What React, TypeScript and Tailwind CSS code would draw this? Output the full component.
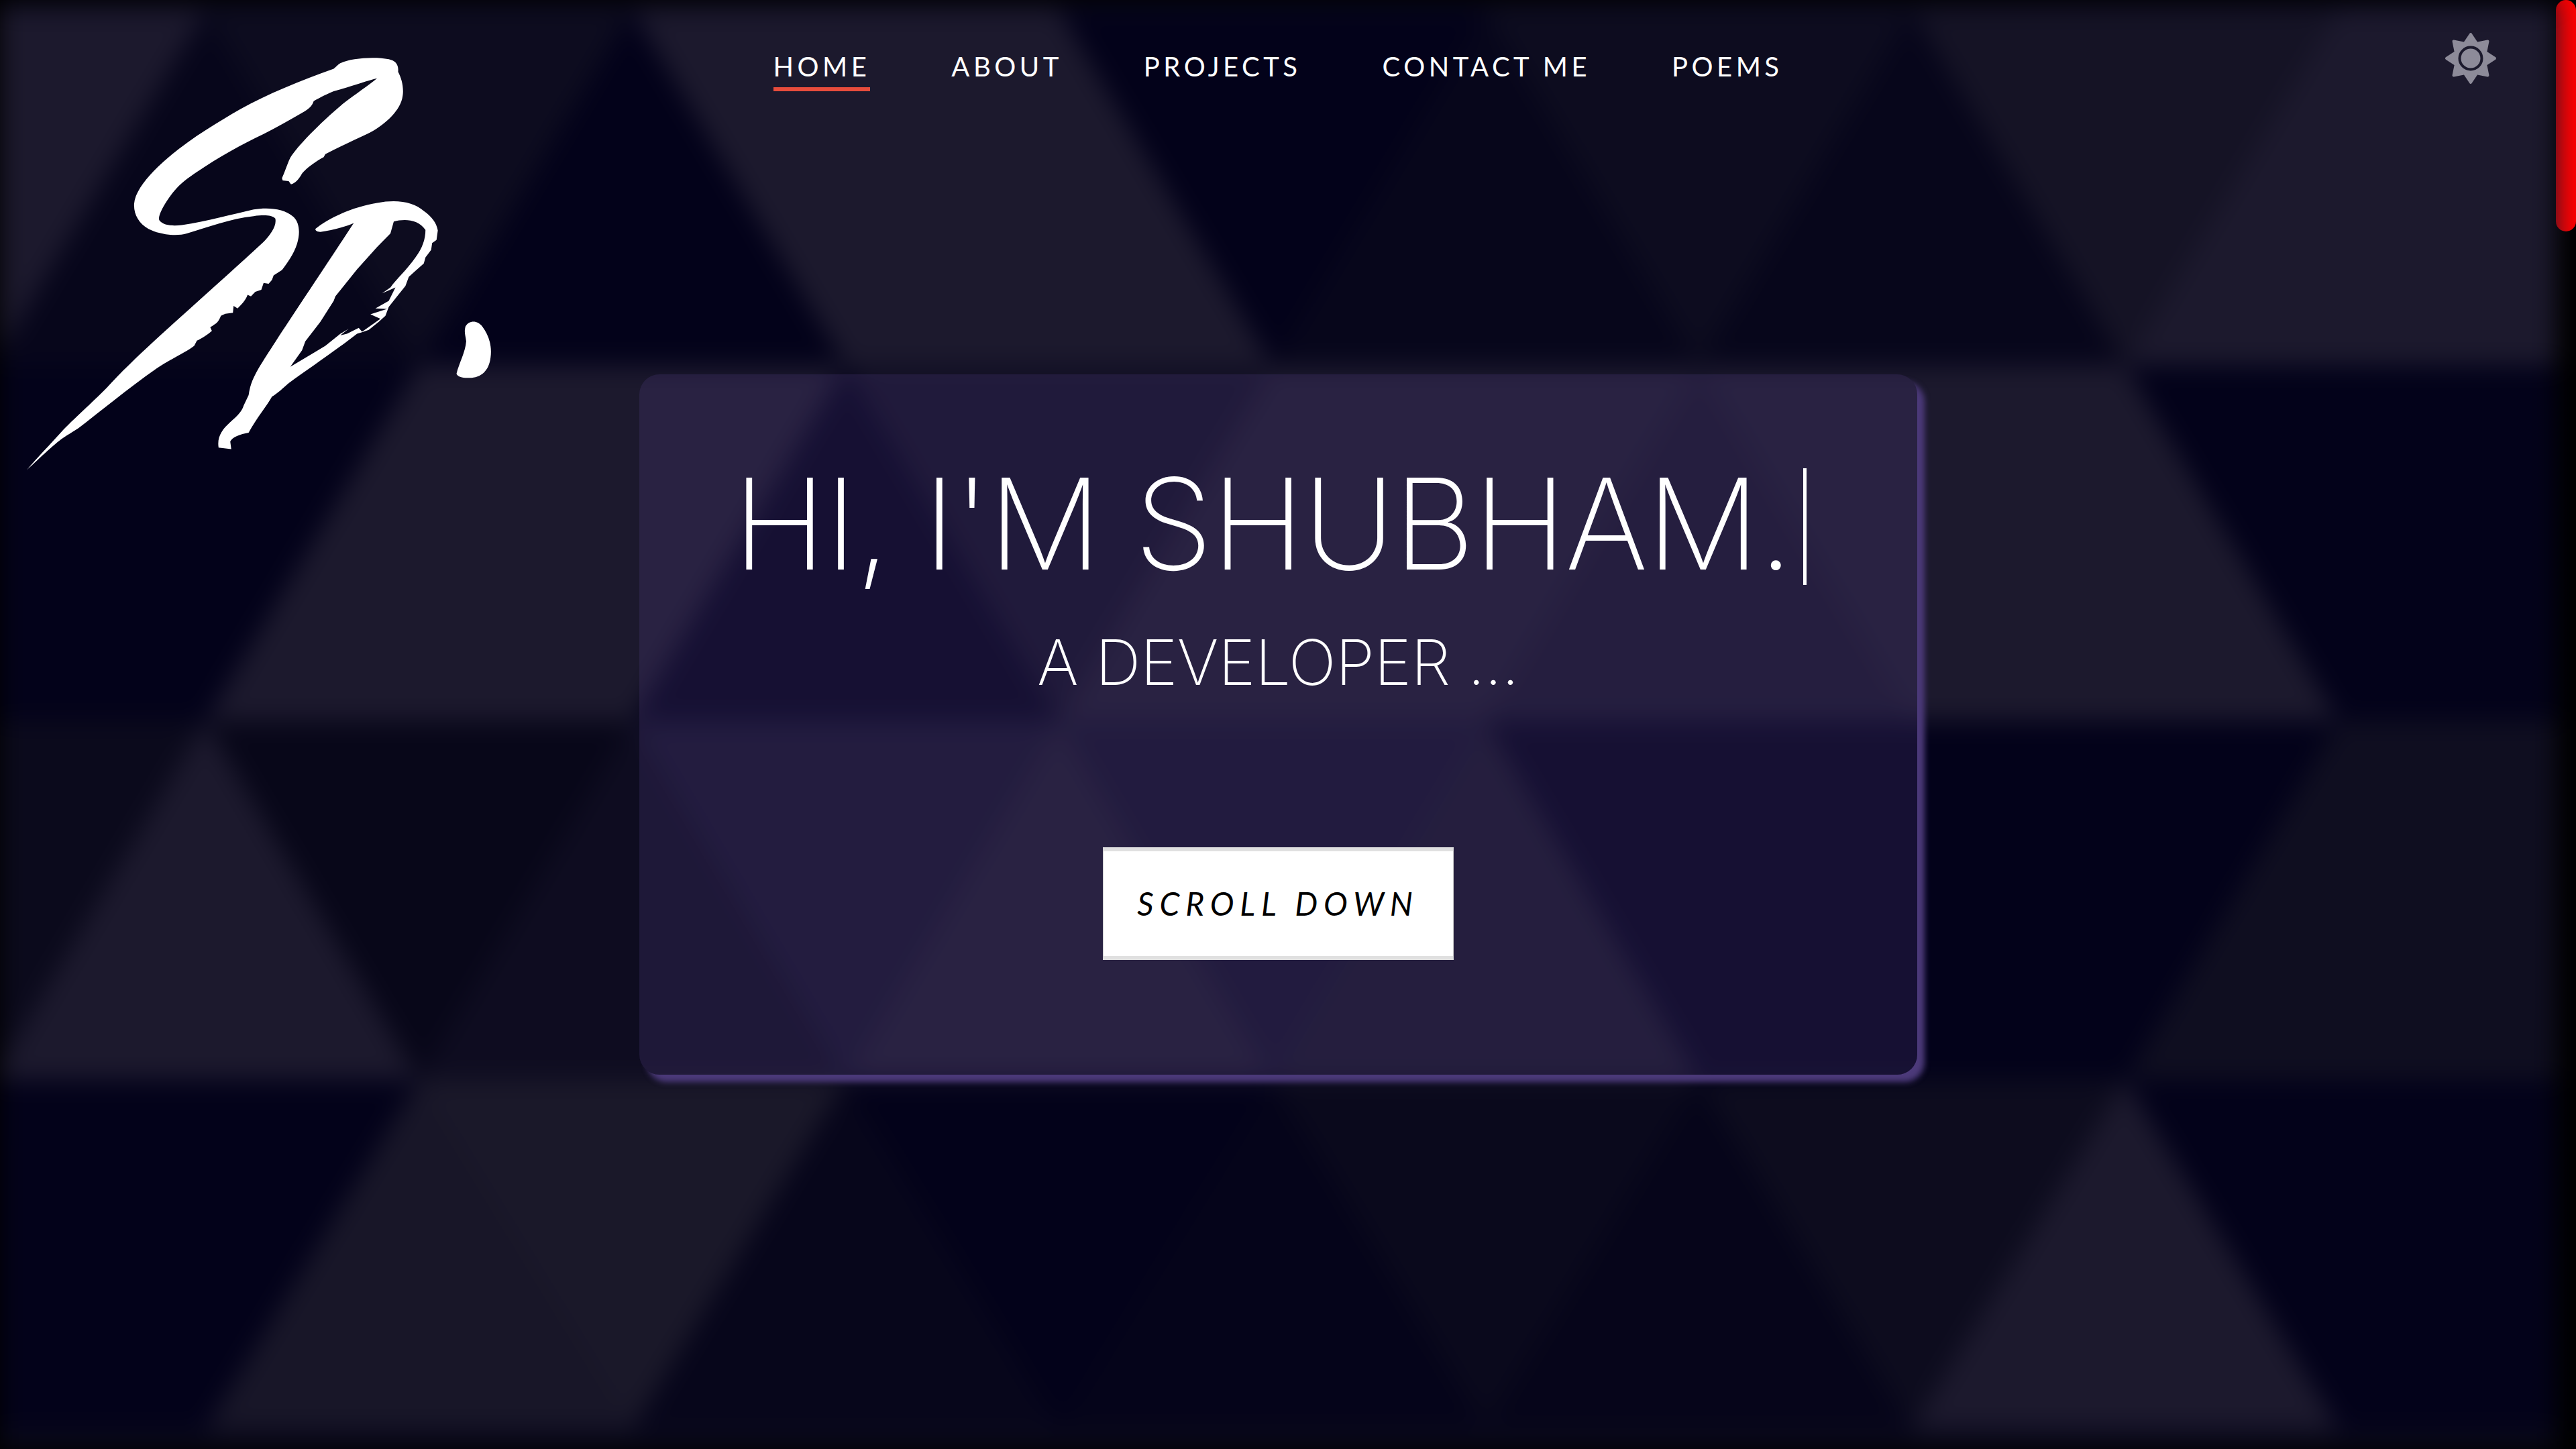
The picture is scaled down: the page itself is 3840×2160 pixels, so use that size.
const L = "#1c192d";
const D = "#03021a";

// background strips: each row alternates down / up triangles, 636px wide and blurred together
const rows = [
  { a: -329, y0: 15, y1: 545, colors: [L, "#07061b", "#0d0c1f", D, L, L, D, "#07061b", "#0d0c1f", "#07061b", "#151325", L, L] },
  { a: -647, y0: 545, y1: 1075, colors: [D, D, D, L, L, D, "#110f24", L, L, "#17152a", L, L, D, D, D] },
  { a: -329, y0: 1075, y1: 1610, colors: ["#0b0a1c", L, "#080719", "#0e0c20", "#14122a", L, "#13112a", "#171528", D, D, D, "#0f0e20", "#0f0e20"] },
  { a: -647, y0: 1610, y1: 2130, colors: [D, D, D, "#181628", "#1a1829", "#07061b", D, "#05041a", "#0a091c", "#06051a", "#0d0c1e", L, D, D, D] },
];

function trianglePoints(a: number, y0: number, y1: number, j: number) {
  const k = Math.floor(j / 2);
  if (j % 2 === 0) {
    return `${a + 636 * k},${y0} ${a + 636 * (k + 1)},${y0} ${a + 318 + 636 * k},${y1}`;
  }
  return `${a + 636 * (k + 1)},${y0} ${a + 318 + 636 * k},${y1} ${a + 318 + 636 * (k + 1)},${y1}`;
}

function Background() {
  return (
    <svg className="absolute left-0 top-0 h-[2160px] w-[3810px] blur-[18px]" viewBox="0 0 3810 2160">
      <rect width="3810" height="2160" fill="#0a091c" />
      {rows.map((row) =>
        row.colors.map((color, j) => (
          <polygon
            key={`${row.y0}-${j}`}
            points={trianglePoints(row.a, row.y0, row.y1, j)}
            fill={color}
            stroke={color}
            strokeWidth="1"
          />
        ))
      )}
    </svg>
  );
}

function Logo() {
  return (
    <svg className="h-[700px] w-[780px]" viewBox="0 0 1568 1568" preserveAspectRatio="none" fill="#fff" fillRule="evenodd">
      <path d="M1015 125C1040 105 1120 98 1165 108C1185 113 1195 125 1193 150C1205 175 1212 210 1205 240C1195 285 1150 330 1100 358C1060 378 1020 400 975 425L970 435C945 450 920 470 905 490C895 510 885 522 872 526L865 515L847 513L845 505C855 480 862 455 870 437C890 400 960 320 1030 255C1065 225 1105 195 1130 172C1100 180 1050 200 1000 215C985 222 960 235 940 248C935 265 925 275 905 287C870 310 830 335 790 358C720 395 640 445 570 500C530 530 505 570 490 600C480 620 475 635 477 645C490 665 520 665 545 662C620 650 700 625 760 610C800 603 850 605 880 635C898 655 900 690 890 725C880 760 860 790 845 812L820 830L815 845L805 858L790 855L783 878L765 885L752 900L742 895C735 915 725 925 712 940L700 932L698 955L675 958L662 965C655 985 650 990 630 1003L635 1015C625 1025 605 1040 590 1048L582 1065C560 1085 510 1110 470 1140C380 1210 300 1285 235 1340C215 1355 205 1360 190 1372C160 1395 110 1450 80 1480C110 1440 150 1395 190 1345C230 1300 290 1240 320 1205C390 1120 480 1030 570 940C640 870 720 790 790 718C810 695 830 665 825 640C815 628 790 628 760 632C690 640 620 670 560 690C530 700 480 695 445 675C415 655 400 625 402 590C405 550 440 500 490 450C560 380 650 320 720 275C800 225 900 180 1000 140Z" />
      <path d="M945 675C980 640 1060 600 1130 588C1190 575 1240 585 1270 615C1295 635 1308 655 1312 680L1308 712L1295 722L1292 745L1275 770L1270 790L1245 815L1225 835L1215 865L1190 900L1165 935L1155 965L1135 985L1105 1012L1085 1020L1070 1025C1000 1085 920 1145 865 1190C850 1205 830 1225 815 1235C800 1265 770 1305 745 1355C720 1360 695 1370 690 1385L693 1410L655 1405C650 1370 665 1345 690 1320C710 1300 725 1285 730 1265L745 1230C750 1190 760 1170 775 1140C830 1040 940 860 1060 655C1030 670 990 680 960 685C950 685 945 680 945 675ZM1180 650C1210 642 1250 640 1275 678C1275 710 1265 740 1245 770C1220 810 1190 840 1170 870L1145 890L1185 870L1165 915L1125 940L1160 942L1110 960L1140 975L1085 1018L1075 1005L1040 1025L1020 1030L1045 1008L1020 1025L975 1065L945 1085L870 1135L905 1080L915 1050L960 985L1000 915L1005 900L1070 810L1130 735L1170 690Z" />
      <path d="M1395 1000C1405 980 1430 978 1445 1000C1465 1030 1475 1065 1470 1105C1465 1150 1440 1175 1400 1172C1385 1172 1370 1168 1368 1158C1375 1125 1395 1085 1397 1050C1395 1030 1390 1020 1395 1000Z" />
    </svg>
  );
}

function SunIcon() {
  const points = Array.from({ length: 16 }, (_, i) => {
    const r = i % 2 === 0 ? 36 : 24;
    const angle = (i * Math.PI) / 8 - Math.PI / 2;
    return `${40 + r * Math.cos(angle)},${40 + r * Math.sin(angle)}`;
  }).join(" ");

  return (
    <svg className="h-20 w-20" viewBox="0 0 80 80">
      <polygon points={points} fill="#8d8b99" stroke="#8d8b99" strokeWidth="4" strokeLinejoin="round" />
      <circle cx="40" cy="40" r="16.5" fill="#8d8b99" stroke="#1c1a2d" strokeWidth="4" />
    </svg>
  );
}

const navItems = ["HOME", "ABOUT", "PROJECTS", "CONTACT ME", "POEMS"];

export default function App() {
  return (
    <div className="flex h-screen w-full overflow-hidden bg-black font-['Lato',sans-serif]">
      <div className="relative h-full w-[3810px] shrink-0">
        <Background />
        <div className="relative">
          <header className="grid h-[558px] grid-cols-[1fr_auto_1fr] items-start">
            <div className="pt-10">
              <Logo />
            </div>
            <nav className="flex gap-[121px] pt-[72px] text-[40px] leading-[54px] tracking-[5.5px] text-white">
              {navItems.map((item, i) => (
                <a key={item} className={i === 0 ? "border-b-[6px] border-[#e74c3c] pb-[4px]" : ""}>
                  {item}
                </a>
              ))}
            </nav>
            <div className="flex justify-end pr-[87px] pt-[47px]">
              <SunIcon />
            </div>
          </header>

          <main className="mx-auto flex h-[1044px] w-[1905px] flex-col items-center rounded-[30px] bg-[rgba(84,62,135,0.24)] pt-[140px] text-white shadow-[11px_11px_9px_#4c3a7a] font-['Inter',sans-serif]">
            <h1 className="mr-[24px] border-r-[5px] border-white pb-2 pr-[17px] text-[188px] leading-[166px] font-extralight tracking-[-2px]">
              HI, I'M SHUBHAM.
            </h1>
            <h2 className="mt-[60px] text-[94px] leading-[110px] font-extralight tracking-[-0.5px]">A DEVELOPER ...</h2>
            <button className="mt-[221px] h-[168px] w-[523px] border-x border-y-[6px] border-x-[#cccccc] border-y-[#e0e0e0] bg-white text-[48px] tracking-[8.8px] text-black italic font-['Lato',sans-serif]">
              SCROLL DOWN
            </button>
          </main>
        </div>
      </div>
      <div className="h-full w-[30px] bg-black">
        <div className="h-[345px] rounded-[15px] bg-[#ff0000]" />
      </div>
    </div>
  );
}
